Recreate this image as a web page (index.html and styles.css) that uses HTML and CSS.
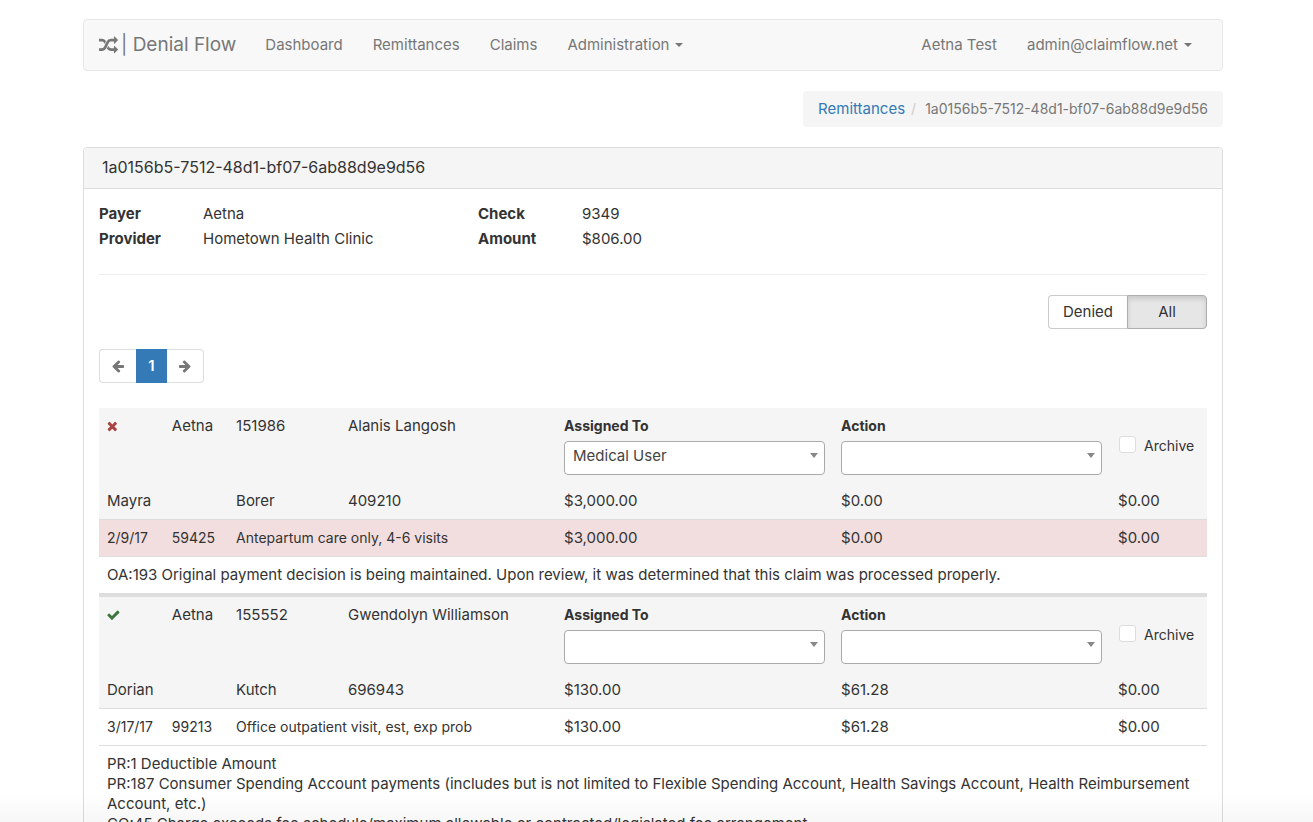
FILE: index.html
```html
<!DOCTYPE html>
<html lang="en">
<head>
<meta charset="utf-8">
<meta name="viewport" content="width=device-width, initial-scale=1">
<title>Denial Flow</title>
<link rel="stylesheet" href="styles.css">
</head>
<body>
<svg class="sprite" aria-hidden="true">
  <symbol id="random" viewBox="0 0 1792 1792"><path d="M666 481q-60 92-137 273-22-45-37-72.500t-40.500-63.500-51-56.500-63-35-81.500-14.500h-224q-14 0-23-9t-9-23v-192q0-14 9-23t23-9h224q250 0 410 225zm1126 799q0 14-9 23l-320 320q-9 9-23 9-13 0-22.500-9.500t-9.500-22.500v-192q-32 0-85 .5t-81 1-73-1-71-5-64-10.500-63-18.500-58-28.500-59-40-55-53.500-56-69.500q59-93 136-273 22 45 37 72.500t40.500 63.500 51 56.500 63 35 81.500 14.500h256v-192q0-14 9-23t23-9q12 0 24 10l319 319q9 9 9 23zm0-896q0 14-9 23l-320 320q-9 9-23 9-13 0-22.500-9.500t-9.500-22.500v-192h-256q-48 0-87 15t-69 45-51 61.500-45 77.500q-32 62-78 171-29 66-49.500 111t-54 105-64 100-74 83-90 68.500-106.500 42-128 16.500h-224q-14 0-23-9t-9-23v-192q0-14 9-23t23-9h224q48 0 87-15t69-45 51-61.500 45-77.500q32-62 78-171 29-66 49.500-111t54-105 64-100 74-83 90-68.500 106.500-42 128-16.500h256v-192q0-14 9-23t23-9q12 0 24 10l319 319q9 9 9 23z"/></symbol>
  <symbol id="times" viewBox="220 0 1792 1792"><path d="M1490 1322q0 40-28 68l-136 136q-28 28-68 28t-68-28l-294-294-294 294q-28 28-68 28t-68-28l-136-136q-28-28-28-68t28-68l294-294-294-294q-28-28-28-68t28-68l136-136q28-28 68-28t68 28l294 294 294-294q28-28 68-28t68 28l136 136q28 28 28 68t-28 68l-294 294 294 294q28 28 28 68z"/></symbol>
  <symbol id="check" viewBox="80 0 1792 1792"><path d="M1671 566q0 40-28 68l-724 724-136 136q-28 28-68 28t-68-28l-136-136-362-362q-28-28-28-68t28-68l136-136q28-28 68-28t68 28l294 295 656-657q28-28 68-28t68 28l136 136q28 28 28 68z"/></symbol>
  <symbol id="arrow-left" viewBox="0 0 1792 1792"><path d="M1664 896v128q0 53-32.500 90.500t-84.500 37.500h-704l293 294q38 36 38 90t-38 90l-75 76q-37 37-90 37-52 0-91-37l-651-652q-37-37-37-90 0-52 37-91l651-650q38-38 91-38 52 0 90 38l75 74q38 38 38 91t-38 91l-293 293h704q52 0 84.500 37.500t32.500 90.500z"/></symbol>
</svg>
<div class="container">
  <nav class="navbar" aria-label="Main">
    <a class="brand" href="#"><svg class="icon icon-brand" aria-hidden="true"><use href="#random"/></svg><span>| Denial Flow</span></a>
    <ul class="nav">
      <li><a href="#">Dashboard</a></li>
      <li><a href="#">Remittances</a></li>
      <li><a href="#">Claims</a></li>
      <li><a href="#">Administration<span class="caret"></span></a></li>
    </ul>
    <ul class="nav nav-right">
      <li><a href="#">Aetna Test</a></li>
      <li><a href="#">admin@claimflow.net<span class="caret"></span></a></li>
    </ul>
  </nav>

  <ol class="breadcrumb">
    <li><a href="#">Remittances</a></li>
    <li class="current-id">1a0156b5-7512-48d1-bf07-6ab88d9e9d56</li>
  </ol>

  <section class="panel">
    <h1 class="panel-heading">1a0156b5-7512-48d1-bf07-6ab88d9e9d56</h1>
    <div class="panel-body">
      <dl class="summary">
        <dt>Payer</dt><dd>Aetna</dd><dt>Check</dt><dd>9349</dd>
        <dt>Provider</dt><dd>Hometown Health Clinic</dd><dt>Amount</dt><dd>$806.00</dd>
      </dl>
      <div class="filter">
        <button type="button">Denied</button>
        <button type="button" class="active" aria-pressed="true">All</button>
      </div>
      <ul class="pagination">
        <li><a href="#" aria-label="Previous"><svg class="icon"><use href="#arrow-left"/></svg></a></li>
        <li><a href="#" class="current" aria-current="page">1</a></li>
        <li><a href="#" aria-label="Next"><svg class="icon flip"><use href="#arrow-left"/></svg></a></li>
      </ul>
      <table class="claims">
        <colgroup><col class="c-date"><col class="c-code"><col class="c-id"><col class="c-name"><col class="c-wide"><col class="c-wide"><col class="c-last"></colgroup>
        <tbody>
          <tr class="head">
            <td><svg class="icon denied" role="img" aria-label="Denied"><use href="#times"/></svg></td>
            <td>Aetna</td><td>151986</td><td>Alanis Langosh</td>
            <td><label class="field" for="assigned1">Assigned To</label><div class="select"><select id="assigned1"><option>Medical User</option></select></div></td>
            <td><label class="field" for="action1">Action</label><div class="select"><select id="action1"><option></option></select></div></td>
            <td><label class="archive"><input type="checkbox"><span>Archive</span></label></td>
          </tr>
          <tr class="head"><td>Mayra</td><td></td><td>Borer</td><td>409210</td><td>$3,000.00</td><td>$0.00</td><td>$0.00</td></tr>
          <tr class="line detail danger"><td>2/9/17</td><td>59425</td><td colspan="2">Antepartum care only, 4-6 visits</td><td>$3,000.00</td><td>$0.00</td><td>$0.00</td></tr>
          <tr class="line"><td colspan="7">OA:193 Original payment decision is being maintained. Upon review, it was determined that this claim was processed properly.</td></tr>
        </tbody>
        <tbody>
          <tr class="head">
            <td><svg class="icon paid" role="img" aria-label="Paid"><use href="#check"/></svg></td>
            <td>Aetna</td><td>155552</td><td>Gwendolyn Williamson</td>
            <td><label class="field" for="assigned2">Assigned To</label><div class="select"><select id="assigned2"><option></option></select></div></td>
            <td><label class="field" for="action2">Action</label><div class="select"><select id="action2"><option></option></select></div></td>
            <td><label class="archive"><input type="checkbox"><span>Archive</span></label></td>
          </tr>
          <tr class="head"><td>Dorian</td><td></td><td>Kutch</td><td>696943</td><td>$130.00</td><td>$61.28</td><td>$0.00</td></tr>
          <tr class="line detail"><td>3/17/17</td><td>99213</td><td colspan="2">Office outpatient visit, est, exp prob</td><td>$130.00</td><td>$61.28</td><td>$0.00</td></tr>
          <tr class="line"><td colspan="7">PR:1 Deductible Amount<br>PR:187 Consumer Spending Account payments (includes but is not limited to Flexible Spending Account, Health Savings Account, Health Reimbursement Account, etc.)<br>CO:45 Charge exceeds fee schedule/maximum allowable or contracted/legislated fee arrangement.</td></tr>
        </tbody>
      </table>
    </div>
  </section>
</div>
</body>
</html>
```

FILE: styles.css
```css
* { box-sizing: border-box; }
html { overflow: hidden; }
body {
  margin: 0;
  padding: 19px 7px 0 0;
  background: #fff;
  color: #333;
  font: 15px/20px Inter, "Open Sans", sans-serif;
}
body::after {
  content: "";
  position: fixed;
  inset: auto 0 0;
  height: 28px;
  background: linear-gradient(transparent, rgba(0, 0, 0, 0.03));
  pointer-events: none;
}
ul, ol, dl, dd, h1 { margin: 0; padding: 0; list-style: none; }
a { color: #337ab7; text-decoration: none; }
.sprite { display: none; }
.icon { width: 14px; height: 14px; fill: currentColor; }
.container { max-width: 1170px; margin: 0 auto; padding: 0 15px; }

.navbar {
  display: flex;
  align-items: center;
  min-height: 52px;
  padding: 0 15px;
  background: #f8f8f8;
  border: 1px solid #e7e7e7;
  border-radius: 4px;
}
.navbar a { color: #777; }
.brand { display: flex; align-items: center; gap: 3px; margin-right: 14px; font-size: 19px; }
.icon-brand { width: 19px; height: 19px; }
.nav { display: flex; }
.nav a { display: flex; align-items: center; padding: 15px; }
.nav-right { margin-left: auto; }
.caret {
  margin-left: 6px;
  border: 4px solid transparent;
  border-top-color: currentColor;
  border-bottom: 0;
}

.breadcrumb {
  display: flex;
  width: fit-content;
  margin: 20px 0 20px auto;
  padding: 8px 15px;
  background: #f5f5f5;
  border-radius: 4px;
  color: #777;
}
.breadcrumb li + li::before { content: "/"; padding: 0 9px 0 6px; color: #ccc; }
.current-id { font-size: 14px; }

.panel { border: 1px solid #ddd; border-radius: 4px; }
.panel-heading {
  padding: 9px 18px 11px;
  background: #f5f5f5;
  border-bottom: 1px solid #ddd;
  border-radius: 3px 3px 0 0;
  font-size: 16px;
  font-weight: 400;
  line-height: 20px;
}
.panel-body { padding: 12px 15px 15px; }
.summary {
  display: grid;
  grid-template-columns: 104fr 275fr 104fr 625fr;
  padding-bottom: 23px;
  border-bottom: 1px solid #eee;
  line-height: 25px;
}
.summary dt { font-weight: 700; }

.filter { display: flex; justify-content: flex-end; margin: 20px 0; }
.filter button {
  min-width: 79px;
  height: 34px;
  padding: 6px 12px;
  border: 1px solid #ccc;
  border-right: 0;
  border-radius: 4px 0 0 4px;
  background: #fff;
  color: #333;
  font: inherit;
}
.filter .active {
  min-width: 80px;
  border: 1px solid #adadad;
  border-radius: 0 4px 4px 0;
  background: #e6e6e6;
  box-shadow: inset 0 3px 5px rgba(0, 0, 0, 0.125);
}

.pagination { display: flex; margin-bottom: 25px; }
.pagination a {
  display: flex;
  align-items: center;
  justify-content: center;
  width: 37px;
  height: 34px;
  border: 1px solid #ddd;
  color: #777;
}
.pagination li:first-child a { border-right: 0; border-radius: 4px 0 0 4px; }
.pagination li:last-child a { border-left: 0; border-radius: 0 4px 4px 0; }
.pagination .current { width: 31px; background: #337ab7; border-color: #337ab7; color: #fff; font-weight: 600; }
.flip { transform: scaleX(-1); }

.claims { width: 100%; table-layout: fixed; border-spacing: 0; }
.c-date { width: 5.85%; }
.c-code { width: 5.8%; }
.c-id { width: 10.1%; }
.c-name { width: 19.5%; }
.c-wide { width: 25%; }
.claims td { padding: 8px; vertical-align: top; }
.head td { background: #f5f5f5; }
.line td { border-top: 1px solid #ddd; }
.detail td:nth-child(-n+3) { font-size: 14px; }
.danger td { background: #f2dede; }
tbody + tbody tr:first-child td { border-top: 4px solid #ddd; }
.claims .icon { display: block; margin-top: 3px; }
.denied { color: #a94442; }
.paid { color: #3c763d; }
.field { display: block; margin-bottom: 5px; font-size: 14px; font-weight: 700; }
.select { position: relative; }
.select::after {
  content: "";
  position: absolute;
  top: 12px;
  right: 7px;
  border: 4px solid transparent;
  border-top: 5px solid #888;
  border-bottom: 0;
  pointer-events: none;
}
.select select {
  display: block;
  width: 100%;
  height: 34px;
  padding: 0 24px 4px 8px;
  appearance: none;
  border: 1px solid #aaa;
  border-radius: 4px;
  background: #fff;
  color: #444;
  font: inherit;
}
.archive { display: flex; gap: 8px; padding-top: 20px; font-size: 14px; }
.archive input {
  flex: none;
  width: 17px;
  height: 17px;
  margin: 0 0 0 1px;
  appearance: none;
  border: 1px solid #ddd;
  border-radius: 3px;
  background: #fff;
}
```
